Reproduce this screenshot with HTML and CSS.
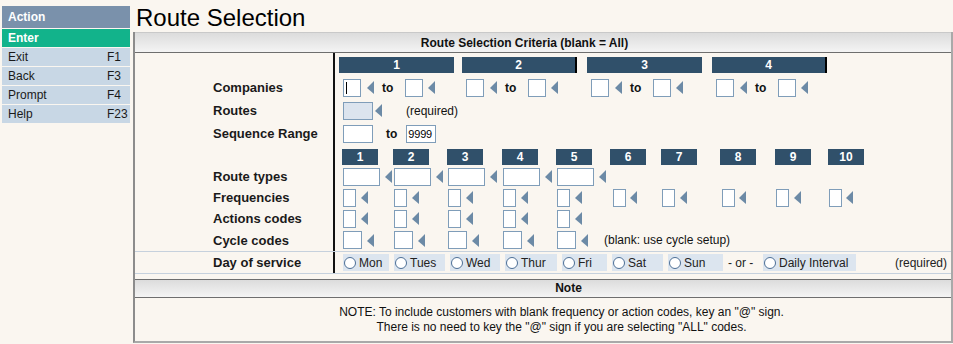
FILE: index.html
```html
<!DOCTYPE html>
<html>
<head>
<meta charset="utf-8">
<title>Route Selection</title>
<link rel="stylesheet" href="styles.css">
</head>
<body>
<div class="app">
  <nav class="side">
    <div class="side-head">Action</div>
    <div class="side-enter">Enter</div>
    <div class="side-item"><span class="lbl">Exit</span><span>F1</span></div>
    <div class="side-item"><span class="lbl">Back</span><span>F3</span></div>
    <div class="side-item"><span class="lbl">Prompt</span><span>F4</span></div>
    <div class="side-item"><span class="lbl">Help</span><span>F23</span></div>
  </nav>
  <main class="main">
    <h1 class="title">Route Selection</h1>
    <section class="panel">
      <div class="phead crit">Route Selection Criteria (blank = All)</div>

      <div class="row h23">
        <div class="lab"></div>
        <div class="cell g4 bars">
          <div class="bar bar4">1</div>
          <div class="bar bar4 edge">2</div>
          <div class="bar bar4">3</div>
          <div class="bar bar4 edge">4</div>
        </div>
      </div>

      <div class="row h23">
        <div class="lab">Companies</div>
        <div class="cell g4">
          <div class="f grp"><span class="caret-wrap"><input class="inp w18" type="text"></span><i class="arr ml6"></i><b class="to">to</b><input class="inp w18" type="text"><i class="arr ml5"></i></div>
          <div class="f grp"><input class="inp w18" type="text"><i class="arr ml6"></i><b class="to">to</b><input class="inp w18" type="text"><i class="arr ml5"></i></div>
          <div class="f grp"><input class="inp w18" type="text"><i class="arr ml6"></i><b class="to">to</b><input class="inp w18" type="text"><i class="arr ml5"></i></div>
          <div class="f grp"><input class="inp w18" type="text"><i class="arr ml6"></i><b class="to">to</b><input class="inp w18" type="text"><i class="arr ml5"></i></div>
        </div>
      </div>

      <div class="row h23">
        <div class="lab">Routes</div>
        <div class="cell pl8">
          <input class="inp w30 req" type="text"><i class="arr ml2"></i><span class="reqtxt">(required)</span>
        </div>
      </div>

      <div class="row h23">
        <div class="lab">Sequence Range</div>
        <div class="cell pl8">
          <input class="inp w30" type="text"><b class="to2">to</b><input class="inp w30 num" type="text" value="9999">
        </div>
      </div>

      <div class="row h21">
        <div class="lab"></div>
        <div class="cell g10 bars">
          <div class="bar bar10">1</div>
          <div class="bar bar10">2</div>
          <div class="bar bar10">3</div>
          <div class="bar bar10">4</div>
          <div class="bar bar10">5</div>
          <div class="bar bar10">6</div>
          <div class="bar bar10">7</div>
          <div class="bar bar10">8</div>
          <div class="bar bar10">9</div>
          <div class="bar bar10">10</div>
        </div>
      </div>

      <div class="row h21">
        <div class="lab">Route types</div>
        <div class="cell g10">
          <div class="f"><input class="inp w37" type="text"><i class="arr ml5"></i></div>
          <div class="f"><input class="inp w37" type="text"><i class="arr ml5"></i></div>
          <div class="f"><input class="inp w37" type="text"><i class="arr ml5"></i></div>
          <div class="f"><input class="inp w37" type="text"><i class="arr ml5"></i></div>
          <div class="f"><input class="inp w37" type="text"><i class="arr ml5"></i></div>
        </div>
      </div>

      <div class="row h21">
        <div class="lab">Frequencies</div>
        <div class="cell g10">
          <div class="f"><input class="inp w13" type="text"><i class="arr ml5"></i></div>
          <div class="f"><input class="inp w13" type="text"><i class="arr ml5"></i></div>
          <div class="f"><input class="inp w13" type="text"><i class="arr ml5"></i></div>
          <div class="f"><input class="inp w13" type="text"><i class="arr ml5"></i></div>
          <div class="f"><input class="inp w13" type="text"><i class="arr ml5"></i></div>
          <div class="f sh2"><input class="inp w13" type="text"><i class="arr ml4"></i></div>
          <div class="f"><input class="inp w13" type="text"><i class="arr ml5"></i></div>
          <div class="f sh1"><input class="inp w13" type="text"><i class="arr ml4"></i></div>
          <div class="f"><input class="inp w13" type="text"><i class="arr ml5"></i></div>
          <div class="f"><input class="inp w13" type="text"><i class="arr ml4"></i></div>
        </div>
      </div>

      <div class="row h21">
        <div class="lab">Actions codes</div>
        <div class="cell g10">
          <div class="f"><input class="inp w13" type="text"><i class="arr ml5"></i></div>
          <div class="f"><input class="inp w13" type="text"><i class="arr ml5"></i></div>
          <div class="f"><input class="inp w13" type="text"><i class="arr ml5"></i></div>
          <div class="f"><input class="inp w13" type="text"><i class="arr ml5"></i></div>
          <div class="f"><input class="inp w13" type="text"><i class="arr ml5"></i></div>
        </div>
      </div>

      <div class="row h22">
        <div class="lab">Cycle codes</div>
        <div class="cell g10">
          <div class="f"><input class="inp w19" type="text"><i class="arr ml5"></i></div>
          <div class="f"><input class="inp w19" type="text"><i class="arr ml5"></i></div>
          <div class="f"><input class="inp w19" type="text"><i class="arr ml5"></i></div>
          <div class="f"><input class="inp w19" type="text"><i class="arr ml5"></i></div>
          <div class="f"><input class="inp w19" type="text"><i class="arr ml5"></i><span class="blank">(blank: use cycle setup)</span></div>
        </div>
      </div>

      <div class="row day">
        <div class="lab">Day of service</div>
        <div class="cell days">
          <label class="radio"><span class="dot"></span>Mon</label>
          <label class="radio"><span class="dot"></span>Tues</label>
          <label class="radio"><span class="dot"></span>Wed</label>
          <label class="radio"><span class="dot"></span>Thur</label>
          <label class="radio"><span class="dot"></span>Fri</label>
          <label class="radio"><span class="dot"></span>Sat</label>
          <label class="radio"><span class="dot"></span>Sun</label>
          <span class="or">- or -</span>
          <label class="radio"><span class="dot"></span>Daily Interval</label>
          <span class="dreq">(required)</span>
        </div>
      </div>

      <div class="phead note">Note</div>
      <div class="note-body">
        NOTE: To include customers with blank frequency or action codes, key an "@" sign.<br>
        There is no need to key the "@" sign if you are selecting "ALL" codes.
      </div>
    </section>
  </main>
</div>
</body>
</html>
```
FILE: styles.css
```css
* { box-sizing: border-box; }
html, body {
  margin: 0;
  background: #faf6f0;
  font-family: "Liberation Sans", Arial, sans-serif;
  font-size: 12px;
  color: #111;
}
.app { display: flex; height: 344px; overflow: hidden; }

/* sidebar */
.side { width: 133px; flex: none; padding: 6px 3px 0 2px; }
.side-head {
  height: 22px; line-height: 22px; padding-left: 6px;
  background: #7a91ab; color: #fff; font-weight: bold;
}
.side-enter {
  margin-top: 1px; height: 18px; line-height: 18px; padding-left: 6px;
  background: #12b38b; color: #fff; font-weight: bold;
}
.side-item {
  margin-top: 1px; height: 18px; line-height: 18px; padding-left: 6px;
  background: #c8d7e5; color: #1a1a1a; display: flex;
}
.side-item .lbl { width: 99px; }

/* main */
.main { flex: 1; min-width: 0; display: flex; flex-direction: column; }
.title {
  margin: 0; height: 32px; padding: 4px 0 0 3px;
  font-size: 24px; line-height: 28px; font-weight: normal; color: #000;
}
.panel {
  border-left: 2px solid #8c8c8c;
  border-right: 2px solid #a9a9a9;
  border-bottom: 2px solid #a9a9a9;
}
.phead {
  background: linear-gradient(#dcdcdc, #f4f4f4);
  font-weight: bold; text-align: center; color: #111;
}
.crit {
  height: 21px; line-height: 20px;
  border-top: 1px solid #c9c9c9; border-bottom: 1px solid #6e6e6e;
  padding-right: 37px;
}
.note {
  margin-top: 5px; height: 19px; line-height: 17px;
  border-top: 1px solid #6e6e6e; border-bottom: 1px solid #6e6e6e;
  padding-left: 51px;
}
.note-body {
  height: 43px; padding: 7px 0 0 37px;
  line-height: 15px; text-align: center; color: #111;
}

/* form rows */
.row { display: flex; }
.h23 { height: 23px; }
.h21 { height: 21px; }
.h22 { height: 22px; }
.lab {
  width: 198px; flex: none; padding-left: 78px;
  display: flex; align-items: center;
  font-weight: bold; font-size: 13px; color: #1a1a1a; white-space: nowrap;
}
.cell {
  flex: 1; min-width: 0;
  border-left: 2px solid #111;
  display: flex; align-items: center;
}
.pl8 { padding-left: 8px; }
.g4 {
  display: grid; grid-template-columns: 123px 125px 125px 115px;
  padding-left: 4px; align-items: center;
}
.g10 {
  display: grid;
  grid-template-columns: 51px 54px 55px 54px 54px 51px 59px 55px 53px 40px;
  padding-left: 7px; align-items: center;
}
.g10 .f { padding-left: 1px; }
.g10 .sh2 { padding-left: 3px; }
.g10 .sh1 { padding-left: 2px; }
.bars { align-items: start; padding-top: 4px; }
.bar {
  height: 16px; line-height: 16px;
  background: #30506a; color: #fff; font-weight: bold; text-align: center;
}
.bar4 { width: 115px; }
.bar10 { width: 36px; }
.edge { border-right: 2px solid #000; }

.f { display: flex; align-items: center; white-space: nowrap; }
.grp { padding-left: 4px; }

.inp {
  display: block; margin: 0; height: 18px; padding: 0 2px;
  border: 1px solid #7f9db9; background: #fff; border-radius: 0;
  font: 12px "Liberation Sans", Arial, sans-serif; color: #000;
  outline: none;
}
.inp.num { padding: 0 1px; font-size: 11px; letter-spacing: -0.2px; }
.req { background: #dce4ee; }
.w13 { width: 13px; }
.w18 { width: 18px; }
.w19 { width: 19px; }
.w30 { width: 30px; }
.w37 { width: 37px; }

.caret-wrap { position: relative; display: block; }
.caret-wrap::after {
  content: ""; position: absolute; left: 3px; top: 3px;
  width: 1px; height: 12px; background: #000;
}

.arr {
  display: block; width: 0; height: 0;
  border-top: 7px solid transparent;
  border-bottom: 6px solid transparent;
  border-right: 7px solid #6c8aa6;
}
.ml2 { margin-left: 2px; }
.ml4 { margin-left: 4px; }
.ml5 { margin-left: 5px; }
.ml6 { margin-left: 6px; }

.to { font-weight: bold; margin: 0 12px 0 8px; }
.to2 { font-weight: bold; margin: 0 9px 0 13px; }
.reqtxt { margin-left: 24px; }
.blank { margin-left: 16px; }

/* day of service */
.day {
  height: 23px;
  border-top: 1px solid #c6d1dd;
  border-bottom: 1px solid #c6d1dd;
}
.days {
  display: grid;
  grid-template-columns: 51px 56px 55px 57px 50px 56px 60px 35px 98px 1fr;
  padding-left: 8px; align-items: center;
}
.radio {
  display: flex; align-items: center; height: 17px;
  background: #dce5ef; color: #222; padding-left: 1px;
  width: calc(100% - 5px); white-space: nowrap;
}
.days .radio:nth-of-type(9) { width: 90px; }
.dot {
  width: 12px; height: 12px; border-radius: 50%;
  border: 1px solid #4d6f96; background: #fff; margin-right: 3px; flex: none;
}
.or { color: #222; }
.dreq { text-align: right; padding-right: 4px; color: #222; }
```
